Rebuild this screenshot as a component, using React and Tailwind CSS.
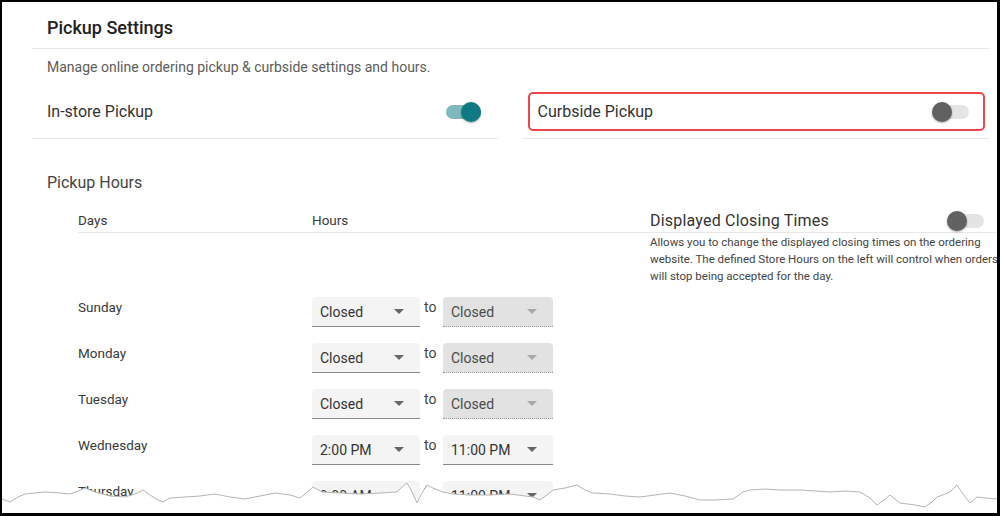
import React from "react";

const FONT = { fontFamily: "Roboto, 'Noto Sans', sans-serif" };

function Toggle({ on }) {
  return (
    <div className="relative w-[37px] h-[20px] shrink-0">
      <div
        className={
          "absolute left-[2px] right-0 top-[3px] h-[14px] rounded-full " +
          (on ? "bg-[#80b9bd]" : "bg-[#e4e4e4]")
        }
      />
      <div
        className={
          "absolute top-0 w-[20px] h-[20px] rounded-full shadow-[0_1px_2px_rgba(0,0,0,0.35)] " +
          (on ? "right-0 bg-[#0e7a83]" : "left-0 bg-[#616161]")
        }
      />
    </div>
  );
}

function Select({ value, disabled, width }) {
  return (
    <div
      className={
        "h-[30px] flex items-center justify-between pl-[8px] pr-[16px] rounded-t-[4px] text-[14px] " +
        width +
        (disabled
          ? " bg-[#e2e2e2] border-b border-dotted border-[#9a9a9a] text-[#4a4a4a]"
          : " bg-[#f4f4f4] border-b border-[#8a8a8a] text-[#333]")
      }
    >
      <span className="leading-[20px]">{value}</span>
      <span
        className={
          "w-0 h-0 border-l-[5px] border-r-[5px] border-t-[5px] border-l-transparent border-r-transparent " +
          (disabled ? "border-t-[#a8a8a8]" : "border-t-[#666]")
        }
      />
    </div>
  );
}

const rows = [
  { day: "Sunday", from: "Closed", to: "Closed", dis: true },
  { day: "Monday", from: "Closed", to: "Closed", dis: true },
  { day: "Tuesday", from: "Closed", to: "Closed", dis: true },
  { day: "Wednesday", from: "2:00 PM", to: "11:00 PM", dis: false },
  { day: "Thursday", from: "9:00 AM", to: "11:00 PM", dis: false },
];

const tear =
  "2,499 10,502 18,497 25,494 35,493 45,492 60,493 70,494 78,491 85,488 95,492 110,496 125,497 135,494 143,490 150,495 158,500 163,502 170,498 185,497 200,496 215,494 230,497 245,499 260,496 275,493 290,495 300,498 306,493 313,487 322,492 340,493 360,494 380,493 397,492 403,486 407,483 412,492 417,503 422,493 427,485 435,489 443,492 453,494 470,495 490,495 510,494 525,496 533,497 540,500 547,495 553,490 565,488 577,485 585,490 593,493 610,494 625,496 640,497 655,495 670,493 685,496 700,500 715,500 733,499 743,492 750,490 765,489 780,490 800,490 815,491 830,492 845,491 860,492 870,498 877,505 884,500 890,495 900,503 915,505 925,507 932,502 937,497 945,494 950,492 957,485 963,494 970,503 977,497 985,498 997,499";

export default function App() {
  return (
    <div
      className="w-[1000px] h-[516px] bg-black pl-[2px] pt-[2px] pr-[3px] pb-[3px]"
      style={FONT}
    >
      <div className="relative w-full h-full bg-white overflow-hidden">
        <div className="pl-[30px] pr-[8px]">
          {/* Title */}
          <div className="h-[47px] pt-[5px] pl-[15px] flex items-center border-b border-[#e8e8e8]">
            <span className="text-[18px] font-medium text-[#212121] leading-[24px]">
              Pickup Settings
            </span>
          </div>
          <div className="mt-[8px] pl-[15px] text-[14px] leading-[20px] text-[#5c5c5c]">
            Manage online ordering pickup &amp; curbside settings and hours.
          </div>

          {/* Toggle columns */}
          <div className="flex gap-[24px]">
            <div className="w-[466px] shrink-0 pt-[15px] pb-[7px] border-b border-[#e8e8e8]">
              <div className="h-[39px] flex items-center justify-between pl-[15px] pr-[17px]">
                <span className="text-[16px] text-[#333]">In-store Pickup</span>
                <Toggle on />
              </div>
            </div>
            <div className="flex-1 pt-[15px] pb-[7px] border-b border-[#e8e8e8]">
              <div className="ml-[6px] mr-[4px] h-[39px] flex items-center justify-between pl-[7.5px] pr-[14.5px] border-[2.5px] border-[#f0464b] rounded-[5px]">
                <span className="text-[16px] text-[#333]">Curbside Pickup</span>
                <Toggle />
              </div>
            </div>
          </div>

          {/* Pickup hours */}
          <div className="mt-[34px] pl-[15px] text-[16px] leading-[20px] text-[#444]">
            Pickup Hours
          </div>

          <div className="ml-[46px] -mr-[8px] mt-[16px]">
            <div className="h-[24px] flex items-center border-b border-[#e8e8e8]">
              <div className="w-[572px] shrink-0 flex text-[13.5px] text-[#3a3a3a]">
                <span className="w-[234px]">Days</span>
                <span>Hours</span>
              </div>
              <div className="w-[334px] shrink-0 flex items-center justify-between">
                <span className="text-[16px] text-[#333] tracking-[0.2px]">
                  Displayed Closing Times
                </span>
                <Toggle />
              </div>
            </div>

            <div className="flex">
              <div className="w-[572px] shrink-0 pt-[64px]">
                {rows.map((r) => (
                  <div key={r.day} className="h-[46px] flex items-start">
                    <div className="w-[234px] text-[13.5px] leading-[20px] text-[#3a3a3a]">
                      {r.day}
                    </div>
                    <Select value={r.from} width="w-[108px]" />
                    <div className="w-[23px] pl-[4px] text-[14px] leading-[20px] text-[#444]">
                      to
                    </div>
                    <Select value={r.to} disabled={r.dis} width="w-[110px]" />
                  </div>
                ))}
              </div>
              <div className="w-[362px] shrink-0 pt-[1px] text-[11.5px] leading-[17px] text-[#444]">
                Allows you to change the displayed closing times on the ordering
                website. The defined Store Hours on the left will control when
                orders will stop being accepted for the day.
              </div>
            </div>
          </div>
        </div>

        {/* torn edge */}
        <svg
          className="absolute left-0 bottom-0 w-[995px] h-[34px]"
          viewBox="2 479 995 34"
          preserveAspectRatio="none"
        >
          <polygon points={tear + " 997,513 2,513"} fill="#ffffff" />
          <polyline points={tear} fill="none" stroke="#b5b5b5" strokeWidth="1" />
        </svg>
      </div>
    </div>
  );
}
